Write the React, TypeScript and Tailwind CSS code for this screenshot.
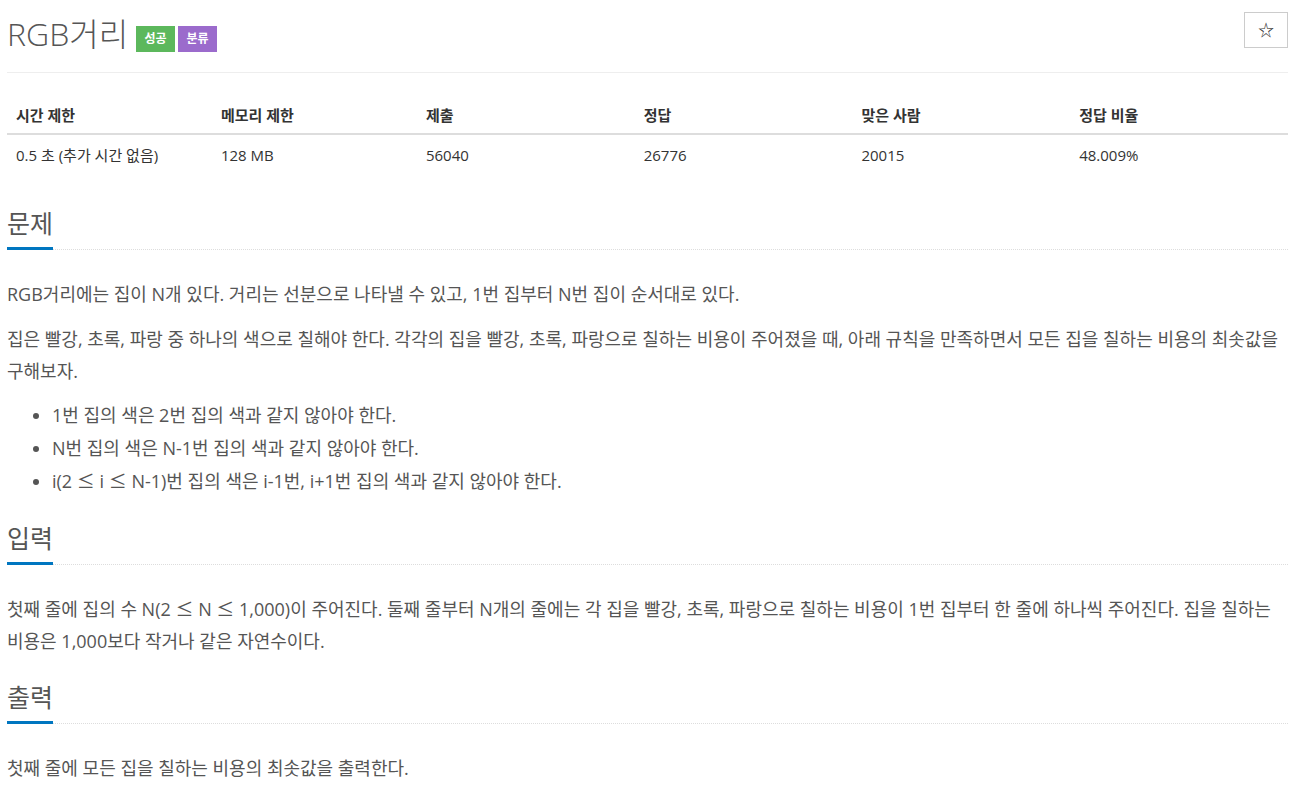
import React from "react";

const font = { fontFamily: '"Open Sans", "Noto Sans CJK KR", sans-serif' };

function Le() {
  return <span className="leading-none align-baseline" style={{ fontFamily: '"Noto Sans CJK KR", sans-serif' }}>≤</span>;
}

function Section({ title, first, children }: { title: string; first?: boolean; children: React.ReactNode }) {
  return (
    <section className={first ? "mt-[32px]" : "mt-[24px]"}>
      <div className="border-b border-dotted border-[#ddd]">
        <h2 className="inline-block text-[25px] leading-[33px] pb-[7px] text-[#555] border-b-[3px] border-[#0076c0] mb-[-1px]">
          {title}
        </h2>
      </div>
      <div className="pt-[28px]">{children}</div>
    </section>
  );
}

export default function App() {
  const heads = ["시간 제한", "메모리 제한", "제출", "정답", "맞은 사람", "정답 비율"];
  const vals = ["0.5 초 (추가 시간 없음)", "128 MB", "56040", "26776", "20015", "48.009%"];
  const widths = ["16%", "16%", "17%", "17%", "17%", "17%"];
  return (
    <div className="bg-white min-h-[804px] text-[#555] px-[7px] pr-[8px] break-keep" style={font}>
      <div className="flex items-start justify-between border-b border-[#eee] pb-[18px] pt-[10px]">
        <div className="flex items-end">
          <h1 className="text-[32px] leading-[40px] font-light text-[#555] mt-[4px]">RGB거리</h1>
          <span className="ml-[8px] mb-[2px] bg-[#5cb85c] text-white text-[12px] font-bold h-[26px] w-[39px] flex items-center justify-center">성공</span>
          <span className="ml-[3px] mb-[2px] bg-[#9b6bcc] text-white text-[12px] font-bold h-[26px] w-[39px] flex items-center justify-center">분류</span>
        </div>
        <button className="mt-[2px] w-[44px] h-[36px] border border-[#ccc] flex items-center justify-center text-[#333] text-[16px]">
          ☆
        </button>
      </div>

      <table className="w-full mt-[24px] text-[15px] table-fixed">
        <colgroup>
          {widths.map((w, i) => (
            <col key={i} style={{ width: w }} />
          ))}
        </colgroup>
        <thead>
          <tr className="border-b-2 border-[#ddd]">
            {heads.map((h) => (
              <th key={h} className="text-left font-bold text-[#333] px-[9px] py-[8px] leading-[20px]">
                {h}
              </th>
            ))}
          </tr>
        </thead>
        <tbody>
          <tr>
            {vals.map((v) => (
              <td key={v} className="px-[9px] py-[10px] leading-[20px] text-[#333]">
                {v}
              </td>
            ))}
          </tr>
        </tbody>
      </table>

      <Section title="문제" first>
        <p className="text-[18px] leading-[32px] mb-[13px]">
          RGB거리에는 집이 N개 있다. 거리는 선분으로 나타낼 수 있고, 1번 집부터 N번 집이 순서대로 있다.
        </p>
        <p className="text-[18px] leading-[32px] mb-[12px]">
          집은 빨강, 초록, 파랑 중 하나의 색으로 칠해야 한다. 각각의 집을 빨강, 초록, 파랑으로 칠하는 비용이 주어졌을 때, 아래 규칙을 만족하면서 모든 집을 칠하는 비용의 최솟값을 구해보자.
        </p>
        <ul className="list-disc pl-[45px] text-[18px] leading-[33px]">
          <li className="h-[33px]">1번 집의 색은 2번 집의 색과 같지 않아야 한다.</li>
          <li className="h-[33px]">N번 집의 색은 N-1번 집의 색과 같지 않아야 한다.</li>
          <li className="h-[33px]">
            i(2 <Le /> i <Le /> N-1)번 집의 색은 i-1번, i+1번 집의 색과 같지 않아야 한다.
          </li>
        </ul>
      </Section>

      <Section title="입력">
        <p className="text-[18px] leading-[32px]">
          첫째 줄에 집의 수 N(2 <Le /> N <Le /> 1,000)이 주어진다. 둘째 줄부터 N개의 줄에는 각 집을 빨강, 초록, 파랑으로 칠하는 비용이 1번 집부터 한 줄에 하나씩 주어진다. 집을 칠하는 비용은 1,000보다 작거나 같은 자연수이다.
        </p>
      </Section>

      <Section title="출력">
        <p className="text-[18px] leading-[32px]">첫째 줄에 모든 집을 칠하는 비용의 최솟값을 출력한다.</p>
      </Section>
    </div>
  );
}
